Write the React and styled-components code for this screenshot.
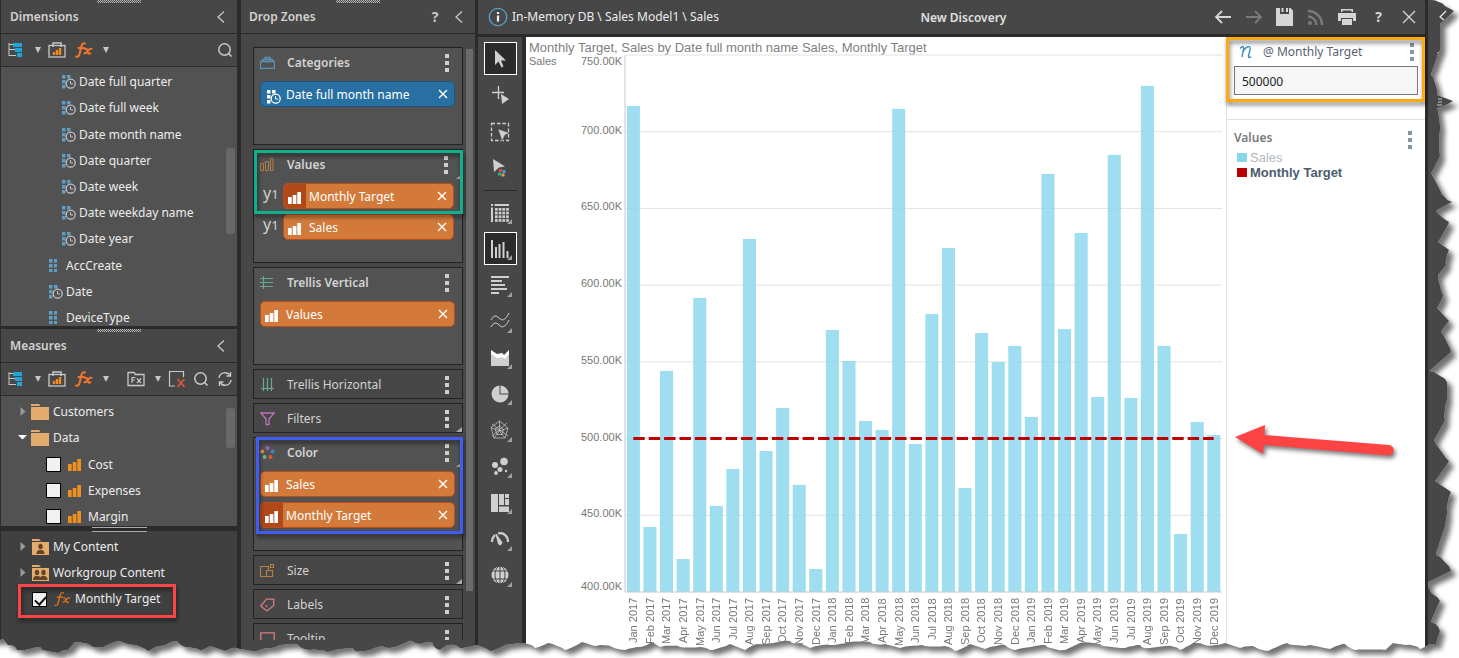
import React, { useState } from "react";
import styled, { createGlobalStyle, css } from "styled-components";

const Global = createGlobalStyle`
  * { box-sizing: border-box; }
  body { margin: 0; background: #fff; }
  button { font: inherit; color: inherit; background: none; border: 0; padding: 0; cursor: pointer; }
`;

const ink = "#c8c8c8";
const dark = "#2b2b2b";
const panel = "#474747";
const raised = "#525252";

const App_ = styled.div`
  position: relative;
  display: flex;
  height: 100vh;
  overflow: hidden;
  background: ${dark};
  color: #ececec;
  font: 12px/16px "Noto Sans", "Open Sans", sans-serif;
`;

/* ---------- shared panel parts ---------- */

const Panel = styled.section`
  display: flex;
  flex-direction: column;
  min-height: 0;
  background: ${panel};
`;

const PanelHead = styled.header`
  position: relative;
  display: flex;
  align-items: center;
  flex: none;
  height: 34px;
  padding: 1px 4px 0 ${(p) => p.$inset || 9}px;
  border-bottom: 1px solid ${dark};
  &::before {
    content: "";
    position: absolute;
    top: 0;
    left: 50%;
    width: 44px;
    height: 3px;
    margin-left: -22px;
    background: repeating-conic-gradient(#b5b5b5 0 25%, #4a4a4a 0 50%) 0 0 / 2px 2px;
  }
`;

const PanelTitle = styled.h2`
  flex: 1;
  margin: 0;
  color: #d2d2d2;
  font-size: 12px;
  font-weight: 600;
  line-height: 16px;
`;

const HeadButton = styled.button`
  display: grid;
  place-items: center;
  width: 24px;
  height: 24px;
  color: ${ink};
  b { font-size: 14px; }
`;

const ToolRow = styled.div`
  display: flex;
  align-items: center;
  flex: none;
  height: 33px;
  border-bottom: 1px solid ${dark};
`;

const RowTool = styled.button`
  display: grid;
  place-items: center;
  flex: none;
  width: ${(p) => p.$w}px;
  height: 24px;
  color: ${ink};
  margin-left: ${(p) => (p.$end ? "auto" : p.$gap ? "8px" : "0")};
`;

const Caret = styled.span`
  border: 3px solid transparent;
  border-top: 6px solid ${ink};
  border-bottom: 0;
`;

/* ---------- left column ---------- */

const LeftColumn = styled.aside`
  display: grid;
  grid-template-rows: 326px 197px 1fr;
  row-gap: 3px;
  flex: none;
  width: 237px;
  padding-left: 1px;
`;

const TreeWrap = styled.div`
  position: relative;
  flex: 1;
  min-height: 0;
  overflow: hidden;
  background: ${raised};
`;

const Tree = styled.ul`
  display: flex;
  flex-direction: column;
  height: ${(p) => p.$h}px;
  margin: 0;
  padding: ${(p) => p.$top || 2}px 0 0;
  list-style: none;
`;

const TreeRow = styled.li`
  display: flex;
  align-items: center;
  flex: 1;
  padding-left: ${(p) => p.$indent}px;
  label { display: flex; align-items: center; }
`;

const Glyph = styled.span`
  display: flex;
  align-items: center;
  flex: none;
  width: ${(p) => p.$w}px;
`;

const Scroll = styled.div`
  position: absolute;
  right: 2px;
  top: ${(p) => p.$top}px;
  width: 9px;
  height: ${(p) => p.$h}px;
  border-radius: 3px;
  background: #686868;
`;

const Check = styled.input`
  appearance: none;
  position: relative;
  width: 15px;
  height: 15px;
  margin: 0 7px 0 0;
  border: 1px solid #000;
  background: #f1f1f1;
  &:checked::before {
    content: "";
    position: absolute;
    left: 4px;
    top: 1px;
    width: 5px;
    height: 9px;
    border: solid #111;
    border-width: 0 2px 2px 0;
    transform: rotate(42deg);
  }
`;

const Content = styled.section`
  position: relative;
  margin-top: 2px;
  background: #404040;
  &::before {
    content: "";
    position: absolute;
    left: 91px;
    top: -4px;
    width: 55px;
    height: 3px;
    border: solid #aaa;
    border-width: 1px 0;
  }
`;

const Frame = styled.div`
  position: absolute;
  z-index: 2;
  top: ${(p) => p.$t}px;
  left: ${(p) => p.$l}px;
  right: ${(p) => p.$r}px;
  height: ${(p) => p.$h}px;
  border: 3px solid ${(p) => p.$c};
  filter: drop-shadow(1px 3px 2px rgba(0, 0, 0, 0.55));
  pointer-events: none;
`;

/* ---------- drop zones ---------- */

const DropColumn = styled(Panel)`
  flex: none;
  width: 234px;
  margin: 0 3px 0 4px;
`;

const ZoneScroller = styled.div`
  position: relative;
  display: flex;
  flex-direction: column;
  gap: 4px;
  flex: 1;
  min-height: 0;
  overflow: hidden;
  margin: 13px 0 18px;
  padding: 0 12px;
`;

const ZoneThumb = styled.div`
  position: absolute;
  right: 2px;
  top: 2px;
  width: 7px;
  height: 542px;
  background: #6b6b6b;
`;

const ZoneBox = styled.section`
  position: relative;
  flex: none;
  height: ${(p) => p.$h}px;
  padding: 0 ${(p) => (p.$inset ? 8 : 7)}px 0 6px;
  border: 1px solid #222;
  background: ${(p) => (p.$open ? raised : panel)};
`;

const ZoneHead = styled.header`
  display: flex;
  align-items: center;
  height: 29px;
  h3 {
    flex: 1;
    margin: 0 0 0 12px;
    color: #d2d2d2;
    font-size: 12px;
    font-weight: ${(p) => (p.$open ? 600 : 400)};
  }
`;

const Dots = styled.button`
  display: grid;
  gap: 3px;
  justify-items: center;
  width: 16px;
  i { width: 4px; height: 4px; background: ${(p) => p.$c || "#cfcfcf"}; }
`;

const Corner = styled.span`
  position: absolute;
  right: 0;
  ${(p) => (p.$up ? "top: 24px;" : "bottom: 0;")}
  border: solid transparent;
  border-width: 0 0 5px 6px;
  border-bottom-color: #a8a8a8;
`;

const Pills = styled.ul`
  display: grid;
  gap: 5px;
  margin: 4px 0 0;
  padding: 0;
  list-style: none;
  li { display: flex; align-items: center; }
`;

const AxisTag = styled.span`
  align-self: flex-start;
  flex: none;
  width: 23px;
  padding-left: 3px;
  color: #d0d0d0;
  font-size: 16px;
  line-height: 20px;
  small { font-size: 13px; }
`;

const PillBox = styled.div`
  display: flex;
  align-items: center;
  flex: 1;
  height: 26px;
  overflow: hidden;
  border: 1px solid ${(p) => (p.$blue ? "#1b5480" : "#b84e1b")};
  border-radius: 5px;
  background: ${(p) => (p.$blue ? "#2870a2" : "#d37a3a")};
  color: #fff;
`;

const PillIcon = styled.span`
  display: grid;
  place-items: center;
  width: 22px;
  height: 24px;
  padding: ${(p) => (p.$blue ? "6px 0 0 4px" : "4px 2px 0 0")};
  margin-right: 3px;
  ${(p) => p.$calc && css`background: #b24718;`}
`;

const PillLabel = styled.span`
  flex: 1;
  padding-top: 2px;
`;

const PillClose = styled.button`
  display: grid;
  place-items: center;
  width: 22px;
  height: 22px;
`;

/* ---------- main ---------- */

const Main = styled.main`
  display: flex;
  flex-direction: column;
  flex: 1;
  min-width: 0;
`;

const TopBar = styled.header`
  display: flex;
  align-items: center;
  justify-content: space-between;
  flex: none;
  height: 34px;
  margin-bottom: 3px;
  padding-left: 10px;
  background: ${panel};
`;

const Crumb = styled.div`
  display: flex;
  align-items: center;
  gap: 4px;
`;

const DocTitle = styled.h1`
  margin: 0;
  padding-top: 2px;
  color: #e0e0e0;
  font-size: 12px;
  font-weight: 600;
`;

const Actions = styled.nav`
  display: flex;
  button {
    display: grid;
    place-items: center;
    width: 31px;
    height: 34px;
    color: #d6d6d6;
  }
  button:disabled { color: #7b7b7b; }
  b { font-size: 14px; }
`;

const Work = styled.div`
  display: flex;
  flex: 1;
  min-height: 0;
`;

const ToolColumn = styled.nav`
  flex: none;
  width: 44px;
  margin-right: 4px;
  padding: 5px 5px 0 6px;
  background: ${panel};
`;

const ToolGroup = styled.div`
  display: flex;
  flex-direction: column;
  justify-content: space-between;
  height: ${(p) => p.$h}px;
  & + & {
    margin-top: 5px;
    padding-top: 5px;
    border-top: 1px solid #2a2a2a;
  }
`;

const ToolButton = styled.button`
  position: relative;
  display: grid;
  place-items: center;
  width: 33px;
  height: 33px;
  padding-right: 1px;
  color: #cfcfcf;
  ${(p) => p.$on && css`border: 1px solid #fff; background: ${dark};`}
  ${(p) => p.$more && css`
    &::after {
      content: "";
      position: absolute;
      right: ${p.$on ? 4 : 5}px;
      bottom: ${p.$on ? 4 : 5}px;
      border: solid transparent;
      border-width: 0 0 5px 5px;
      border-bottom-color: #a0a0a0;
    }
  `}
`;

const Chart = styled.figure`
  display: grid;
  grid-template: 18px minmax(0, 1fr) 66px / 99px minmax(0, 1fr);
  flex: 1;
  min-width: 0;
  margin: 0;
  padding-right: 4px;
  background: #fff;
  color: #777;
  font: 11px/12px "Liberation Sans", Arial, sans-serif;
`;

const ChartTitle = styled.figcaption`
  grid-column: 1 / -1;
  padding: 3px 0 0 3px;
  color: #808080;
  font-size: 13px;
  line-height: 15px;
`;

const Plot = styled.svg`
  display: block;
  width: 100%;
  height: 100%;
  overflow: visible;
  text { fill: #777; font-size: 11px; }
`;

const Months = styled.div`
  display: flex;
  grid-column: 2;
  padding-top: 6px;
  overflow: hidden;
`;

const Month = styled.span`
  display: flex;
  justify-content: center;
  flex: 1;
  min-width: 0;
  height: 56px;
  span {
    writing-mode: vertical-rl;
    transform: rotate(180deg);
    text-align: right;
    white-space: nowrap;
  }
`;

const Side = styled.aside`
  position: relative;
  flex: none;
  width: 199px;
  border-left: 1px solid #e2e2e2;
  background: #fff;
`;

const Param = styled.section`
  position: relative;
  height: 83px;
  padding: 4px 7px 0;
  border-bottom: 1px solid #e2e2e2;
  color: #5a6072;
`;

const ParamHead = styled.div`
  display: flex;
  align-items: center;
  height: 22px;
  padding-left: 5px;
  margin-bottom: 3px;
  label { flex: 1; padding-left: 10px; }
  button { margin-right: -2px; }
`;

const ParamInput = styled.input`
  display: block;
  width: 100%;
  height: 29px;
  padding: 2px 7px 0;
  border: 1px solid #777;
  background: #f6f6f6;
  color: #222;
  font: inherit;
`;

const Legend = styled.section`
  padding: 9px 7px;
  font: 13px/15px "Liberation Sans", Arial, sans-serif;
`;

const LegendHead = styled.div`
  display: flex;
  align-items: flex-start;
  justify-content: space-between;
  height: 21px;
  h3 {
    margin: 0;
    color: #7a7a7a;
    font: 600 12px/17px "Noto Sans", "Open Sans", sans-serif;
  }
  button { align-self: center; }
`;

const LegendItem = styled.div`
  display: flex;
  align-items: center;
  gap: 3px;
  padding-left: 3px;
  color: ${(p) => (p.$strong ? "#4c5c6b" : "#b5b9bd")};
  font-weight: ${(p) => (p.$strong ? 700 : 400)};
  &::before {
    content: "";
    width: 10px;
    height: 9px;
    background: ${(p) => p.$c};
  }
`;

const NextPanel = styled.aside`
  flex: none;
  width: 31px;
  margin-left: 3px;
  padding: 7px 0 0 8px;
  background: ${panel};
`;

const Overlay = styled.svg`
  position: absolute;
  z-index: 3;
  pointer-events: none;
`;

const Pointer = styled(Overlay)`
  left: 4px;
  top: 380px;
`;

const Torn = styled(Overlay)`
  inset: 0;
  width: 100%;
  height: 100%;
`;

/* ---------- icons ---------- */

const Svg = ({ w = 16, h = w, children, ...rest }) => (
  <svg width={w} height={h} viewBox={`0 0 ${w} ${h}`} fill="none" stroke="currentColor" aria-hidden="true" {...rest}>
    {children}
  </svg>
);

const Chevron = () => <Svg w={16}><path d="M11 2.500 5 8l6 5.500" strokeWidth="1.300" /></Svg>;

const Hierarchy = () => (
  <Svg w={16} h={14}>
    <path d="M1 0v13M1 1.500h4M1 6.500h6M1 12.500h7" />
    <g fill="#1fa5d8" stroke="none"><rect x="5" width="9" height="4" /><rect x="7" y="5" width="7" height="4" /><rect x="9" y="10" width="5" height="4" /></g>
  </Svg>
);

const ChartBag = () => (
  <Svg w={18} h={16}>
    <rect x="1" y="3.500" width="16" height="11.500" strokeWidth="1.300" />
    <path d="M5 5V1h8v4" strokeWidth="1.500" />
    <path d="M6 13V10M9 13V8M12 13V6" stroke="#f28c1a" strokeWidth="2.400" />
  </Svg>
);

const Fx = ({ w = 18, thin }) => (
  <Svg w={w} h={16} viewBox="0 0 18 16" stroke={thin ? "#e8761a" : "#f4762b"} strokeWidth={thin ? 1.3 : 2} strokeLinecap="round">
    <path d="M1 14.500c2 .8 3-.5 3.700-3.300L6.300 4.500C7 1.800 8 .8 10 1.500M3.500 6h5.500" />
    <path d="M10 7c1.500-.8 2 .3 2.700 2.500s1.200 3 2.800 1.800M16.500 6.800c-2-.6-3 1-4 2.400s-1.500 2.600-3 2" />
  </Svg>
);

const Search = () => <Svg w={16}><circle cx="7.500" cy="7.500" r="5.700" strokeWidth="1.500" /><path d="m11.500 11.500 3 3" strokeWidth="1.600" /></Svg>;

const FxFolder = () => (
  <Svg w={18} h={16}>
    <path d="M1 14.500V1.500h6l1.500 2H17v11z" strokeWidth="1.300" />
    <path d="M5 12V6.500h3.500M5 9h3M10 7.500l4 4.500M14 7.500 10 12" strokeWidth="1.200" />
  </Svg>
);

const Discard = () => (
  <Svg w={18} h={18}>
    <path d="M7 16H1.500V1.500h14V7" strokeWidth="1.200" />
    <path d="m9.500 9 7 8M16.500 9l-7 8" stroke="#e2573f" strokeWidth="1.500" />
  </Svg>
);

const Refresh = () => (
  <Svg w={16} strokeWidth="1.400">
    <path d="M2 7a6 6 0 0 1 11-2.500M14 9a6 6 0 0 1-11 2.500" />
    <path d="M13.500 1v4h-4M2.500 15v-4h4" />
  </Svg>
);

const Cubes = ({ c = "#5f9dc4" }) => (
  <Svg w={8} h={13} fill={c} stroke="none">
    {[0, 5, 10].map((y) => [0, 5].map((x) => <rect key={x + y * 9} x={x} y={y} width="3.600" height="3.600" />))}
  </Svg>
);

const CubesTime = ({ c = "#5f9dc4", k = "#c4c4c4", bg = raised }) => (
  <Svg w={14} h={14} stroke={k}>
    <g fill={c} stroke="none">
      <rect width="3.500" height="3.500" /><rect x="5" width="3.500" height="3.500" /><rect y="5" width="3.500" height="3.500" /><rect y="10" width="3.500" height="3.500" /><rect x="5" y="5" width="3" height="3" />
    </g>
    <circle cx="8.700" cy="8.700" r="4.500" fill={bg} strokeWidth="1.300" />
    <path d="M8.500 6v3H11" />
  </Svg>
);

const Bars = ({ c = "#f0901e" }) => (
  <Svg w={13} h={12} fill={c} stroke="none">
    <rect y="5" width="3.700" height="7" /><rect x="4.700" y="3" width="3.700" height="9" /><rect x="9.300" width="3.700" height="12" />
  </Svg>
);

const Folder = () => (
  <Svg w={18} h={16} fill="#e3ab6c" stroke="none"><path d="M0 0h8l1.500 2H0zM0 3h18v13H0z" /></Svg>
);

const PeopleFolder = ({ group }) => (
  <Svg w={18} h={16} fill="#e3ab6c" stroke="none">
    <path d="M1 0h7l2 2H1zM1 3h17v13H1z" />
    <g fill="#63432a">
      {(group ? [6, 12.5] : [9.5]).map((x) => (
        <g key={x}><ellipse cx={x} cy="7.500" rx="2.200" ry="2.700" /><path d={`M${x - 4} 15c0-3 1.500-4 3-4h2c1.500 0 3 1 3 4z`} /></g>
      ))}
    </g>
  </Svg>
);

const Twist = ({ open }) => (
  <Svg w={10} h={10} stroke="none" fill={open ? "#fff" : "#9a9a9a"}>
    <path d={open ? "M0 2h9L4.500 6.500z" : "M2.500 0v9L7.500 4.500z"} />
  </Svg>
);

const Cross = ({ w = 10, s = 1.4 }) => <Svg w={w} strokeWidth={s}><path d={`M1 1 ${w - 1} ${w - 1}M${w - 1} 1 1 ${w - 1}`} /></Svg>;

const zoneIcons = {
  categories: <Svg w={15} h={13} stroke="#5b93b8"><path d="M.5 5.500h14v7H.5zM2.500 5.500V3.500h10v2M5 3.500v-2h5v2" strokeWidth="1.300" /></Svg>,
  values: <Svg w={15} h={13} stroke="#b28048"><path d="M.5 5.500h3v7h-3zM5.500 3.500h3v9h-3zM10.500 .5h2.500v12h-2.500z" /></Svg>,
  trellisV: <Svg w={15} h={13} stroke="#69a891"><path d="M0 2.500h13M0 6.500h13M0 10.500h13M3.500 0v13" strokeWidth="1.200" /></Svg>,
  trellisH: <Svg w={15} h={13} stroke="#69a891"><path d="M3.500 0v13M7.500 0v13M11.500 0v13M1 10.500h13" strokeWidth="1.200" /></Svg>,
  filters: <Svg w={15} h={14} stroke="#bd74bb"><path d="M.8 1h13.400L9 7v5.500H6V7z" strokeWidth="1.300" /></Svg>,
  color: (
    <Svg w={15} h={14} stroke="none">
      <circle cx="7.500" cy="2" r="2" fill="#9765c2" /><circle cx="2.200" cy="5.500" r="2" fill="#e58a3a" /><circle cx="12.600" cy="5.500" r="2" fill="#3e83c4" /><circle cx="4.500" cy="11" r="2" fill="#6db58f" /><circle cx="10.500" cy="11" r="2" fill="#db5a3b" />
    </Svg>
  ),
  size: <Svg w={15} h={13} stroke="#b28048"><path d="M7 12.500H.5V2.500h8V6M6.500 6.500h6v6h-6zM10.500 .5h3v3h-3z" strokeWidth="1.200" /></Svg>,
  labels: <Svg w={15} h={14} stroke="#d57f7f"><path d="M.7 8 6.500 1.200h7.200V7.500L7 13z" strokeWidth="1.300" /><circle cx="6.500" cy="8" r="1" fill="#d57f7f" stroke="none" /></Svg>,
  tooltip: <Svg w={15} h={13} stroke="#d57f7f"><path d="M.8.8h13.400v9H9.500L7.500 12 5.500 9.800H.8z" strokeWidth="1.300" /></Svg>,
};

const selectTools = [
  ["Select", <Svg w={20} fill="currentColor" stroke="none"><path d="M5 1v15l3.500-3.500 3 6 2-1-2.500-6h5z" /></Svg>],
  ["Add point", <Svg w={20}><path d="M8.500 1v13M2 7.500h12" strokeWidth="1.300" /><path d="m11 9 8 5-7 5z" fill="currentColor" stroke="none" /></Svg>],
  ["Marquee", <Svg w={20}><path d="M1.500 1.500h17v17h-17z" strokeWidth="1.300" strokeDasharray="3.500 2" /><path d="m8 7 12 4-5 2-3 6z" fill="currentColor" stroke={panel} strokeWidth=".6" /></Svg>],
  ["Colour pick", <Svg w={20} stroke="none"><path d="m3 1 12 7.500-6 1L4 14z" fill="currentColor" /><rect x="9" y="11" width="3" height="3" fill="#d94f3c" /><rect x="12.500" y="12" width="3" height="3" fill="#3c9fd9" /><rect x="8" y="14.500" width="3" height="3" fill="#2fae86" /><rect x="11.500" y="15.500" width="3" height="3" fill="#e6a04a" /></Svg>],
];

const chartTools = [
  ["Grid", (
    <Svg w={20} fill="currentColor" stroke="none">
      <path d="M1 1h2v2H1zM4.500 1H19v2H4.500zM1 4.500h2V19H1z" />
      {[5, 8.7, 12.4, 16.1].map((y) => [5, 8.7, 12.4, 16.1].map((x) => <rect key={x + "-" + y} x={x} y={y} width="2.700" height="2.700" />))}
    </Svg>
  )],
  ["Columns", <Svg w={20} strokeWidth="2"><path d="M2 1v18M6 8v11M9.500 5v14M13.500 3v16M17.500 12v7" /></Svg>],
  ["Bars", <Svg w={20} strokeWidth="2.200"><path d="M1 2h18M1 6h11M1 10h14M1 14h16M1 18h8" /></Svg>],
  ["Lines", <Svg w={20} strokeWidth="1"><path d="M1 9c3-5 5-5 8-2s6 3 10-5M1 16c3-5 5-5 8-2s6 3 10-5" /></Svg>],
  ["Area", <Svg w={20} stroke="none"><path d="M1 3l6 4 5-1 2 2 5-5v15H1z" fill="#cfcfcf" /><path d="M1 2l6 4 5-1 2 2 5-5v4l-4 5-3-2-5 1-6-4z" fill="#fff" /></Svg>],
  ["Pie", <Svg w={20} stroke="none" fill="currentColor"><path d="M9.500 1.500a8.500 8.500 0 1 0 9 9H9.500z" /><path d="M10.500 1.500A8.500 8.500 0 0 1 18.500 9.500h-8z" /></Svg>],
  ["Radar", <Svg w={20} strokeWidth=".7"><path d="m9.500 1 8.500 7-3 10H4L1 7.500zM9.500 6l4 3.500-1.500 5H7L5 9zM9.500 1v10L18 8M9.500 11 15 18M9.500 11 4 18M9.500 11 1 7.500M2 4l16 12M17 3 2 16" /></Svg>],
  ["Scatter", <Svg w={20} stroke="none" fill="currentColor"><circle cx="14" cy="4.500" r="3.800" /><circle cx="5" cy="8" r="3" /><circle cx="10" cy="12.500" r="2.500" /><circle cx="6" cy="16" r="1.900" /><circle cx="16" cy="14" r="1.200" /></Svg>],
  ["Treemap", <Svg w={20} stroke="none" fill="currentColor"><path d="M1 1h7v18H1zM9 1h5v11H9zM15 1h4v4h-4zM15 6h4v6h-4zM9 13.500h10V19H9z" /></Svg>],
  ["Gauge", <Svg w={20}><path d="M2 13c0-3 1-5 3-7M8 4.500c6-1.500 10 3 10 8.500" strokeWidth="2.200" /><path d="m6 5 6 8.500-1.500 2.500-2-1z" fill="currentColor" strokeWidth="1" /></Svg>],
  ["Map", <Svg w={20}><circle cx="10" cy="10" r="8.500" fill="currentColor" stroke="none" /><g stroke={panel} strokeWidth="1"><ellipse cx="10" cy="10" rx="5" ry="9" /><path d="M10 1v18M1 6h18M1 14h18" /></g></Svg>],
];

const BackArrow = ({ flip }) => (
  <Svg w={18} h={16} strokeWidth="1.800">
    <path d={flip ? "M1 8h15M10 2l6 6-6 6" : "M2 8h15M8 2 2 8l6 6"} />
  </Svg>
);

const actions = [
  ["Back", <BackArrow />],
  ["Forward", <BackArrow flip />, true],
  ["Save", <Svg w={18} h={18} stroke="none" fill="currentColor"><path d="M0 0h4v6h9V0h1.500L17 2.500V18H0zM5.500 0h2v4h-2zM10 0h2v4h-2z" /></Svg>],
  ["Feed", <Svg w={18} h={18} strokeWidth="2.400"><circle cx="3" cy="15" r="2" fill="currentColor" stroke="none" /><path d="M1 8.500a8.500 8.500 0 0 1 8.500 8.500M1 3a14 14 0 0 1 14 14" /></Svg>, true],
  ["Print", <Svg w={18} h={18} stroke="none" fill="currentColor"><path d="M3 1h12v3H3zM0 5h18v8h-3v-3H3v3H0zM4 11h10v6H4z" /><path d="M4.500 2.500h9V5h-9z" fill={panel} /></Svg>],
];

/* ---------- data ---------- */

const sales = [
  716.8, 442.4, 544.1, 421.5, 591.7, 456.1, 480.2, 630.1, 491.9, 519.9, 469.8, 415,
  570.8, 550.6, 511.5, 505.6, 714.9, 496.5, 581.2, 624.2, 467.8, 568.8, 549.9, 560.4,
  514.1, 672.5, 571.4, 634, 527.1, 684.9, 526.5, 729.9, 560.4, 437.8, 510.8, 502.3,
];
const names = "Jan Feb Mar Apr May Jun Jul Aug Sep Oct Nov Dec".split(" ");
const months = sales.map((_, i) => `${names[i % 12]} ${2017 + Math.floor(i / 12)}`);
const ticks = [750, 700, 650, 600, 550, 500, 450, 400];
const yOf = (v) => ((750 - v) / 350) * 100;

const dimensions = [
  ["Date full quarter", 1], ["Date full week", 1], ["Date month name", 1], ["Date quarter", 1],
  ["Date week", 1], ["Date weekday name", 1], ["Date year", 1], ["AccCreate", 0], ["Date", 2], ["DeviceType", 0],
];

const zones = [
  { id: "categories", name: "Categories", h: 98, pills: [{ t: "Date full month name", blue: true }] },
  { id: "values", name: "Values", h: 114, corner: true, axis: true, pills: [{ t: "Monthly Target", calc: true }, { t: "Sales" }], frame: { $t: 0, $l: 0, $r: -1, $h: 64, $c: "#10b08d" } },
  { id: "trellisV", name: "Trellis Vertical", h: 98, pills: [{ t: "Values" }] },
  { id: "trellisH", name: "Trellis Horizontal", h: 30 },
  { id: "filters", name: "Filters", h: 30, corner: true },
  { id: "color", name: "Color", h: 114, corner: true, pills: [{ t: "Sales" }, { t: "Monthly Target", calc: true }], frame: { $t: -1, $l: 2, $r: -1, $h: 97, $c: "#3f5cf5" } },
  { id: "size", name: "Size", h: 30, corner: true },
  { id: "labels", name: "Labels", h: 30 },
  { id: "tooltip", name: "Tooltip", h: 30 },
];

/* Outline of the torn sheet: along the bottom, then up the right side. */
const bottomEdge = [
  [0, 640], [3, 639], [8, 645], [17, 650], [30, 649], [40, 647], [48, 651], [58, 653], [68, 650], [75, 642], [90, 645], [103, 647], [112, 643], [122, 642], [135, 645], [148, 651], [155, 647], [165, 645], [177, 641], [185, 647], [200, 650], [210, 646], [225, 651], [237, 648],
  [257, 651], [268, 648], [280, 645], [290, 644], [300, 647], [310, 650], [325, 651], [335, 650], [348, 648], [355, 651], [370, 650], [382, 646], [395, 647], [405, 643], [412, 641], [420, 644], [432, 642], [440, 650], [447, 645], [460, 648], [476, 645],
  [490, 651], [505, 645], [520, 643], [535, 648], [548, 643], [565, 650], [582, 642], [595, 646], [612, 647], [625, 650], [640, 647], [652, 642], [660, 647], [680, 647], [700, 647],
  [710, 650], [730, 644], [745, 650], [757, 644], [778, 642], [790, 641], [800, 643], [810, 648], [830, 645], [850, 642], [870, 642], [885, 644], [900, 648], [925, 646], [945, 646], [955, 651], [970, 644], [985, 649], [1005, 645], [1015, 650], [1045, 645], [1065, 650], [1080, 643], [1100, 645], [1125, 648], [1140, 645], [1150, 648], [1165, 646],
  [1180, 650], [1193, 643], [1205, 645], [1225, 643], [1240, 648], [1255, 647], [1268, 651], [1287, 643], [1310, 645], [1330, 649], [1345, 644], [1355, 650], [1385, 650], [1393, 643], [1405, 645], [1420, 649], [1430, 644], [1436, 645],
];
const rightEdge = [
  [1437, 640], [1440, 631], [1431, 622], [1440, 601], [1434, 595], [1428, 582], [1451, 571], [1436, 555], [1444, 530], [1447, 510], [1451, 492], [1435, 481], [1449, 461], [1434, 440], [1445, 420], [1447, 400], [1447, 382], [1429, 371], [1451, 352], [1441, 332], [1449, 321], [1437, 308], [1443, 295], [1438, 275], [1446, 265], [1449, 250], [1438, 242], [1449, 222], [1436, 211], [1452, 202], [1440, 190], [1431, 173], [1440, 155], [1440, 130], [1437, 108], [1453, 101], [1437, 95], [1431, 75], [1440, 50], [1440, 24], [1454, 11], [1445, 6], [1429, 0],
];
const roughen = (pts) => {
  const out = [];
  pts.forEach(([x, y], i) => {
    out.push([x, y]);
    const n = pts[i + 1];
    if (!n) return;
    const steps = Math.max(1, Math.round(Math.hypot(n[0] - x, n[1] - y) / 4));
    for (let s = 1; s < steps; s++) {
      const t = s / steps;
      const j = (((i * 7 + s * 5) % 5) - 2) * 0.6;
      out.push([x + (n[0] - x) * t + j, y + (n[1] - y) * t - j]);
    }
  });
  return out.map(([x, y]) => `${x.toFixed(1)},${y.toFixed(1)}`).join(" L");
};
const edge = roughen([...bottomEdge, ...rightEdge]);
const sheetPath = `M-20,-20 L-20,640 L${edge} L1429,-20 Z`;
const paperPath = `M0,658 L${edge} L1459,0 L1459,658 Z`;

/* ---------- pieces ---------- */

const DotsButton = ({ label, c }) => (
  <Dots type="button" aria-label={label} $c={c}><i /><i /><i /></Dots>
);

const FieldTools = ({ full }) => (
  <ToolRow>
    <RowTool $w={30} aria-label="Hierarchy"><Hierarchy /></RowTool>
    <RowTool $w={14} aria-label="Hierarchy options"><Caret /></RowTool>
    <RowTool $w={24} aria-label="Content"><ChartBag /></RowTool>
    <RowTool $w={30} aria-label="Formula"><Fx /></RowTool>
    <RowTool $w={14} aria-label="Formula options"><Caret /></RowTool>
    {full && (
      <>
        <RowTool $w={30} $gap aria-label="Formula folder"><FxFolder /></RowTool>
        <RowTool $w={14} aria-label="Folder options"><Caret /></RowTool>
        <RowTool $w={24} aria-label="Clear"><Discard /></RowTool>
      </>
    )}
    <RowTool $w={24} $end aria-label="Search"><Search /></RowTool>
    {full && <RowTool $w={24} aria-label="Refresh"><Refresh /></RowTool>}
  </ToolRow>
);

const CheckRow = ({ name, icon, gap, indent, initial = false }) => {
  const [on, setOn] = useState(initial);
  return (
    <TreeRow $indent={indent}>
      <label>
        <Check type="checkbox" checked={on} onChange={(e) => setOn(e.target.checked)} />
        <Glyph $w={gap}>{icon}</Glyph>
        {name}
      </label>
    </TreeRow>
  );
};

const FolderRow = ({ name, open, icon }) => (
  <TreeRow $indent={17}>
    <Glyph $w={13}><Twist open={open} /></Glyph>
    <Glyph $w={22}>{icon}</Glyph>
    {name}
  </TreeRow>
);

const Zone = ({ zone }) => {
  const { id, name, h, pills, corner, axis, frame } = zone;
  return (
    <ZoneBox $h={h} $open={!!pills} $inset={axis}>
      <ZoneHead $open={!!pills}>
        {zoneIcons[id]}
        <h3>{name}</h3>
        <DotsButton label={`${name} options`} />
      </ZoneHead>
      {corner && <Corner $up={!!pills} />}
      {pills && (
        <Pills>
          {pills.map((p) => (
            <li key={p.t}>
              {axis && <AxisTag>y<small>1</small></AxisTag>}
              <PillBox $blue={p.blue}>
                <PillIcon $calc={p.calc} $blue={p.blue}>
                  {p.blue ? <CubesTime c="#fff" k="#fff" bg="#2870a2" /> : <Bars c="#fff" />}
                </PillIcon>
                <PillLabel>{p.t}</PillLabel>
                <PillClose type="button" aria-label={`Remove ${p.t}`}><Cross /></PillClose>
              </PillBox>
            </li>
          ))}
        </Pills>
      )}
      {frame && <Frame {...frame} />}
    </ZoneBox>
  );
};

const SalesChart = () => {
  const step = 100 / sales.length;
  return (
    <Chart>
      <ChartTitle>Monthly Target, Sales by Date full month name Sales, Monthly Target</ChartTitle>
      <Plot>
        <text x="3" y="10">Sales</text>
        {ticks.map((t) => (
          <text key={t} x="96" y={`${yOf(t)}%`} dy={t === 750 ? 10 : t === 400 ? -2 : 2} textAnchor="end">{t}.00K</text>
        ))}
      </Plot>
      <Plot>
        {ticks.slice(0, -1).map((t) => (
          <line key={t} x1="0" x2="100%" y1={`${yOf(t)}%`} y2={`${yOf(t)}%`} stroke="#e2e2e2" />
        ))}
        {sales.map((v, i) => (
          <rect key={i} x={`${(i + 0.11) * step}%`} width={`${step * 0.79}%`} y={`${yOf(v)}%`} height={`${100 - yOf(v)}%`} fill="#8ed8ee" fillOpacity="0.85" />
        ))}
        <line x1="0" x2="0" y1="0" y2="100%" stroke="#c8c8c8" />
        <line x1="0" x2="100%" y1="100%" y2="100%" stroke="#c8c8c8" />
        <line x1={`${step / 2}%`} x2={`${100 - step / 2}%`} y1={`${yOf(500)}%`} y2={`${yOf(500)}%`} stroke="#c00000" strokeWidth="3" strokeDasharray="11.400 4" />
      </Plot>
      <Months>
        {months.map((m) => <Month key={m}><span>{m}</span></Month>)}
      </Months>
    </Chart>
  );
};

export default function App() {
  const [target, setTarget] = useState("500000");
  return (
    <App_>
      <Global />
      <LeftColumn>
        <Panel>
          <PanelHead>
            <PanelTitle>Dimensions</PanelTitle>
            <HeadButton aria-label="Collapse dimensions"><Chevron /></HeadButton>
          </PanelHead>
          <FieldTools />
          <TreeWrap>
            <Tree $h={264}>
              {dimensions.map(([name, kind]) => (
                <TreeRow key={name} $indent={kind === 1 ? 61 : 48}>
                  <Glyph $w={17}>{kind ? <CubesTime /> : <Cubes />}</Glyph>
                  {name}
                </TreeRow>
              ))}
            </Tree>
            <Scroll $top={81} $h={86} />
          </TreeWrap>
        </Panel>
        <Panel>
          <PanelHead>
            <PanelTitle>Measures</PanelTitle>
            <HeadButton aria-label="Collapse measures"><Chevron /></HeadButton>
          </PanelHead>
          <FieldTools full />
          <TreeWrap>
            <Tree $h={134} $top={3}>
              <FolderRow name="Customers" icon={<Folder />} />
              <FolderRow name="Data" open icon={<Folder />} />
              {["Cost", "Expenses", "Margin"].map((n) => (
                <CheckRow key={n} name={n} indent={45} gap={20} icon={<Bars />} />
              ))}
            </Tree>
            <Scroll $top={12} $h={40} />
          </TreeWrap>
        </Panel>
        <Content>
          <Tree $h={81} $top={3}>
            <FolderRow name="My Content" icon={<PeopleFolder />} />
            <FolderRow name="Workgroup Content" icon={<PeopleFolder group />} />
            <CheckRow name="Monthly Target" indent={31} gap={21} icon={<Fx w={17} thin />} initial />
          </Tree>
          <Frame $t={53} $l={17} $r={61} $h={34} $c="#fb4547" />
        </Content>
      </LeftColumn>

      <DropColumn>
        <PanelHead $inset={8}>
          <PanelTitle>Drop Zones</PanelTitle>
          <HeadButton aria-label="Help"><b>?</b></HeadButton>
          <HeadButton aria-label="Collapse drop zones"><Chevron /></HeadButton>
        </PanelHead>
        <ZoneScroller>
          {zones.map((z) => <Zone key={z.id} zone={z} />)}
          <ZoneThumb />
        </ZoneScroller>
      </DropColumn>

      <Main>
        <TopBar>
          <Crumb>
            <Svg w={20}><circle cx="10" cy="10" r="8.700" stroke="#5b9fc9" strokeWidth="1.300" /><path d="M10 5v2M10 8.500v6" stroke="#eee" strokeWidth="2.200" /></Svg>
            In-Memory DB \ Sales Model1 \ Sales
          </Crumb>
          <DocTitle>New Discovery</DocTitle>
          <Actions>
            {actions.map(([name, icon, off]) => <button key={name} type="button" aria-label={name} disabled={off}>{icon}</button>)}
            <button type="button" aria-label="Help"><b>?</b></button>
            <button type="button" aria-label="Close"><Cross w={14} s={1.3} /></button>
          </Actions>
        </TopBar>
        <Work>
          <ToolColumn>
            <ToolGroup $h={143}>
              {selectTools.map(([name, icon], i) => <ToolButton key={name} aria-label={name} $on={i === 0}>{icon}</ToolButton>)}
            </ToolGroup>
            <ToolGroup $h={402}>
              {chartTools.map(([name, icon]) => <ToolButton key={name} aria-label={name} $more $on={name === "Columns"}>{icon}</ToolButton>)}
            </ToolGroup>
          </ToolColumn>
          <SalesChart />
          <Side>
            <Param>
              <ParamHead>
                <Svg w={14} h={14} stroke="#3d8fbf" strokeWidth="1.400"><path d="M1 3.500C3 1 5 1 4.500 4L3 12M4 7c2-5 8-8 7-2L9.500 11c-.3 2 1 2 2.500 .5" /></Svg>
                <label htmlFor="target">@ Monthly Target</label>
                <DotsButton label="Parameter options" c="#8496a5" />
              </ParamHead>
              <ParamInput id="target" value={target} onChange={(e) => setTarget(e.target.value)} />
              <Frame $t={0} $l={-1} $r={0} $h={65} $c="#fbac0c" />
            </Param>
            <Legend>
              <LegendHead>
                <h3>Values</h3>
                <DotsButton label="Legend options" c="#8496a5" />
              </LegendHead>
              <LegendItem $c="#87d6ec">Sales</LegendItem>
              <LegendItem $c="#ba0000" $strong>Monthly Target</LegendItem>
            </Legend>
            <Pointer width="180" height="60" viewBox="0 0 180 60">
              <path d="M4 20 34 8 33.500 18 158 28a5 5 0 0 1-1 10.500L33 28 32 37z" fill="#fd4444" style={{ filter: "drop-shadow(2px 3px 2px rgba(0,0,0,.5))" }} />
            </Pointer>
          </Side>
        </Work>
      </Main>

      <NextPanel>
        <Svg w={16} h={100}>
          <path d="M10 4 4 10l4 3" strokeWidth="1.200" />
          <path d="M1 46h5M1 49h5M1 52h5M1 55h5M1 58h4M2 72l4 2M1 76h4M2 92h4M2 95h4M1 98h5" stroke="#c3cbe6" />
        </Svg>
      </NextPanel>

      <Torn viewBox="0 0 1459 658" preserveAspectRatio="none" aria-hidden="true">
        <defs>
          <clipPath id="paper"><path d={paperPath} /></clipPath>
          <filter id="soft" x="-5%" y="-5%" width="110%" height="110%"><feGaussianBlur stdDeviation="2.500" /></filter>
        </defs>
        <path d={paperPath} fill="#fff" />
        <g clipPath="url(#paper)">
          <path d={sheetPath} transform="translate(5 5)" fill="#000" fillOpacity="0.550" filter="url(#soft)" />
        </g>
      </Torn>
    </App_>
  );
}
